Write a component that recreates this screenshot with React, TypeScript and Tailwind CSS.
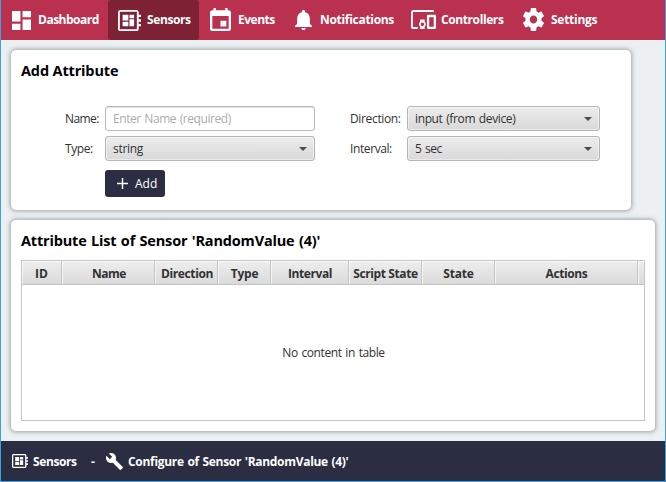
import React from "react";

const PATHS = {
  dashboard: "M3 13h8V3H3v10zm0 8h8v-6H3v6zm10 0h8V11h-8v10zm0-18v6h8V3h-8z",
  board:
    "M22 9V7h-2V5c0-1.100-.9-2-2-2H4c-1.100 0-2 .9-2 2v14c0 1.100.9 2 2 2h14c1.100 0 2-.9 2-2v-2h2v-2h-2v-2h2v-2h-2V9h2zm-3.600 10.400H3.600V4.600h14.800v14.800zM6 13h5v4H6zm6-6h4v3h-4zM6 7h5v5H6zm6 4h4v6h-4z",
  event:
    "M17 12h-5v5h5v-5zM16 1v2H8V1H6v2H5c-1.110 0-2 .9-2 2v14c0 1.100.89 2 2 2h14c1.100 0 2-.9 2-2V5c0-1.100-.9-2-2-2h-1V1h-2zm3 18H5V8h14v11z",
  bell: "M12 22c1.100 0 2-.9 2-2h-4c0 1.100.9 2 2 2zm6-6v-5c0-3.070-1.640-5.640-4.500-6.320V4c0-.83-.67-1.500-1.500-1.500s-1.500.67-1.500 1.500v.68C7.630 5.360 6 7.920 6 11v5l-2 2v1h16v-1l-2-2z",
  devices:
    "M2.700 5.600h18.300V4H3c-1.100 0-2 .9-2 2v12c0 1.100.9 2 2 2h4v-1.700H2.700V5.600zM13 12H9v1.780c-.61.550-1 1.330-1 2.220s.39 1.670 1 2.220V20h4v-1.780c.61-.55 1-1.340 1-2.220s-.39-1.670-1-2.220V12zm-2 5.500c-.83 0-1.500-.67-1.500-1.500s.67-1.500 1.500-1.500 1.500.67 1.500 1.500-.67 1.500-1.500 1.500zM22 8h-6c-.5 0-1 .5-1 1v10c0 .5.5 1 1 1h6c.5 0 1-.5 1-1V9c0-.5-.5-1-1-1zm-1 10h-4v-8h4v8z",
  settings:
    "M19.430 12.980c.04-.32.070-.64.070-.98s-.03-.66-.07-.98l2.110-1.650c.19-.15.240-.42.120-.64l-2-3.460c-.12-.22-.39-.3-.61-.22l-2.490 1c-.52-.4-1.080-.73-1.690-.98l-.38-2.650C14.460 2.180 14.250 2 14 2h-4c-.25 0-.46.180-.49.420l-.38 2.650c-.61.250-1.170.590-1.690.98l-2.490-1c-.23-.09-.49 0-.61.220l-2 3.460c-.13.220-.07.490.120.640l2.110 1.650c-.04.320-.07.650-.07.980s.03.660.070.980l-2.110 1.650c-.19.150-.24.420-.12.640l2 3.460c.12.220.39.300.61.220l2.490-1c.52.400 1.080.730 1.690.980l.38 2.650c.03.240.24.420.49.420h4c.25 0 .46-.18.490-.42l.38-2.650c.61-.25 1.170-.59 1.690-.98l2.490 1c.23.090.49 0 .61-.22l2-3.460c.12-.22.070-.49-.12-.64l-2.110-1.650zM12 15.500c-1.930 0-3.500-1.570-3.500-3.500s1.570-3.500 3.500-3.500 3.500 1.570 3.500 3.500-1.570 3.500-3.500 3.500z",
  wrench:
    "M22.700 19l-9.100-9.100c.9-2.300.4-5-1.500-6.900-2-2-5-2.400-7.400-1.300L9 6 6 9 1.600 4.700C.4 7.100.9 10.100 2.900 12.100c1.900 1.900 4.600 2.400 6.900 1.500l9.100 9.100c.4.4 1 .4 1.400 0l2.300-2.300c.5-.4.5-1.100.1-1.400z",
};

type IconName = keyof typeof PATHS;

function Icon({ name, box, className }: { name: IconName; box: string; className: string }) {
  return (
    <svg viewBox={box} preserveAspectRatio="none" fill="currentColor" className={`block shrink-0 ${className}`}>
      <path d={PATHS[name]} />
    </svg>
  );
}

const NAV: { label: string; icon: IconName; box: string; cell: string; glyph: string; text: string }[] = [
  { label: "Dashboard", icon: "dashboard", box: "3 3 18 18", cell: "w-[107px] pl-[11px] gap-[7px]", glyph: "w-[19px] h-[19px]", text: "tracking-[-0.5px]" },
  { label: "Sensors", icon: "board", box: "2 3 20 18", cell: "w-[91px] pl-[10px] gap-[6px] rounded-[3px] bg-[#802236]", glyph: "w-[23px] h-[21px]", text: "tracking-[-0.4px]" },
  { label: "Events", icon: "event", box: "3 1 18 20", cell: "w-[86px] pl-[11px] gap-[7px]", glyph: "w-[21px] h-[23px] -mt-[2px]", text: "tracking-[-0.5px]" },
  { label: "Notifications", icon: "bell", box: "4 2.5 16 19.5", cell: "w-[118px] pl-[10px] gap-[8px]", glyph: "w-[17px] h-[20px]", text: "tracking-[-0.3px]" },
  { label: "Controllers", icon: "devices", box: "1 4 22 16", cell: "w-[112px] pl-[8px] gap-[5px]", glyph: "w-[25px] h-[19px] -mt-[1px]", text: "tracking-[-0.4px]" },
  { label: "Settings", icon: "settings", box: "2.2 2 19.6 20", cell: "w-[90px] pl-[8px] gap-[7px]", glyph: "w-[21px] h-[23px] -mt-[1px]", text: "tracking-[-0.27px]" },
];

const COLUMNS = [
  { label: "ID", cell: "w-[40px]", text: "" },
  { label: "Name", cell: "w-[93px] pl-[2px]", text: "tracking-[-0.5px]" },
  { label: "Direction", cell: "w-[63px] pl-[2px]", text: "tracking-[-0.4px]" },
  { label: "Type", cell: "w-[53px] pl-[1px]", text: "tracking-[-0.2px]" },
  { label: "Interval", cell: "w-[78px] pl-[1px]", text: "tracking-[-0.4px]" },
  { label: "Script State", cell: "w-[73px] pl-[1px]", text: "tracking-[-0.4px]" },
  { label: "State", cell: "w-[73px] pl-[1px]", text: "tracking-[-0.2px]" },
  { label: "Actions", cell: "w-[143px] pl-[1px]", text: "tracking-[-0.4px]" },
  { label: "", cell: "w-[7px]", text: "" },
];

const PANEL = "rounded-[5px] bg-white shadow-[0_0_4px_1px_rgba(90,100,100,0.55)]";

function Select({ value, className }: { value: string; className: string }) {
  return (
    <button
      className={`flex h-[25px] items-center justify-between rounded-[3px] border border-[#b5b5b5] bg-linear-to-b from-[#ececec] to-[#d9d9d9] pl-[7px] pr-[7px] shadow-[inset_0_0_0_1px_rgba(255,255,255,0.45)] ${className}`}
    >
      <span>{value}</span>
      <svg viewBox="0 0 8 4" className="h-[4px] w-[8px]">
        <path d="M0 0h8L4 4z" fill="#4d4d4d" />
      </svg>
    </button>
  );
}

export default function App() {
  return (
    <div className="flex h-[482px] w-[666px] flex-col overflow-hidden border-x border-b border-[#3ca2e4] bg-[#ecf0f3] font-['Open_Sans','Noto_Sans',sans-serif] text-[12px] leading-[16px] text-[#323232]">
      <nav className="flex h-[40px] shrink-0 bg-[#b9314f] font-bold text-white">
        {NAV.map((n) => (
          <a key={n.label} className={`flex h-full shrink-0 items-center whitespace-nowrap ${n.cell}`}>
            <Icon name={n.icon} box={n.box} className={n.glyph} />
            <span className={n.text}>{n.label}</span>
          </a>
        ))}
      </nav>

      <main className="flex flex-1 flex-col gap-[10px] pl-[10px] pt-[10px]">
        <section className={`h-[160px] w-[620px] shrink-0 px-[10px] pt-[11px] ${PANEL}`}>
          <h2 className="text-[14.5px] font-bold leading-[20px] tracking-[-0.15px] text-black">Add Attribute</h2>
          <div className="mt-[25px] flex pl-[44px]">
            <div className="grid grid-cols-[40px_210px] gap-y-[5px]">
              <label className="self-center tracking-[-0.6px]">Name:</label>
              <input
                placeholder="Enter Name (required)"
                className="h-[25px] rounded-[3px] border border-[#b8b8b8] bg-white px-[7px] text-[12px] tracking-[-0.45px] shadow-[inset_0_1px_1px_rgba(0,0,0,0.12)] outline-none [word-spacing:1px] placeholder:text-[#adadad]"
              />
              <label className="self-center tracking-[-0.4px]">Type:</label>
              <Select value="string" className="tracking-[-0.3px]" />
              <button className="col-start-2 mt-[4px] flex h-[27px] w-[60px] items-center rounded-[3px] bg-[#2b2d42] pl-[12px] text-white">
                <svg viewBox="0 0 11 11" className="mr-[7px] h-[11px] w-[11px]">
                  <path d="M5.500 0v11M0 5.500h11" stroke="currentColor" strokeWidth="1.400" />
                </svg>
                Add
              </button>
            </div>
            <div className="ml-[35px] grid h-[55px] grid-cols-[57px_193px] gap-y-[5px]">
              <label className="self-center tracking-[-0.35px]">Direction:</label>
              <Select value="input (from device)" className="tracking-[-0.38px] [word-spacing:1px]" />
              <label className="self-center tracking-[-0.4px]">Interval:</label>
              <Select value="5 sec" className="tracking-[-0.5px] [word-spacing:1px]" />
            </div>
          </div>
        </section>

        <section className={`h-[211px] w-[644px] shrink-0 px-[10px] pt-[11px] ${PANEL}`}>
          <h2 className="whitespace-nowrap text-[14.5px] font-bold leading-[20px] tracking-[-0.17px] text-black [word-spacing:0.8px]">
            Attribute List of Sensor 'RandomValue (4)'
          </h2>
          <div className="mt-[9px] flex h-[161px] w-[624px] flex-col border border-[#c4c4c4]">
            <div className="flex h-[24px] shrink-0 border-b border-[#c4c4c4] bg-linear-to-b from-[#eeeeee] to-[#dadada] font-bold">
              {COLUMNS.map((c, i) => (
                <div
                  key={i}
                  className={`flex shrink-0 items-center justify-center whitespace-nowrap border-r border-[#c4c4c4] pt-[2px] shadow-[inset_1px_1px_0_rgba(255,255,255,0.7)] last:border-r-0 ${c.cell}`}
                >
                  <span className={c.text}>{c.label}</span>
                </div>
              ))}
            </div>
            <div className="flex flex-1 items-center justify-center pl-[1px] tracking-[-0.4px] [word-spacing:1px]">No content in table</div>
          </div>
        </section>
      </main>

      <footer className="flex h-[40px] shrink-0 items-center bg-[#2b2d42] pl-[11px] pt-[1px] font-bold text-white">
        <Icon name="board" box="2 3 20 18" className="-mt-[1px] h-[14px] w-[16px]" />
        <span className="ml-[5px] w-[58px] tracking-[-0.4px]">Sensors</span>
        <span className="w-[15px]">-</span>
        <Icon name="wrench" box="1 1 22 22" className="-mt-[1px] h-[17px] w-[17px]" />
        <span className="ml-[5px] whitespace-nowrap tracking-[-0.3px] [word-spacing:0.8px]">Configure of Sensor 'RandomValue (4)'</span>
      </footer>
    </div>
  );
}
